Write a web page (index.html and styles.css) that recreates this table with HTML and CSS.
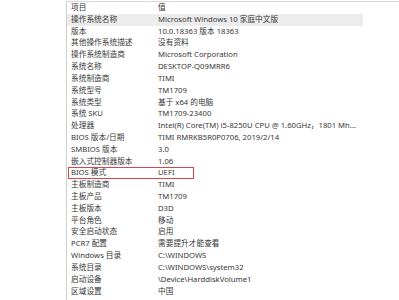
FILE: index.html
```html
<!DOCTYPE html>
<html lang="zh-CN">
<head>
<meta charset="utf-8">
<link rel="stylesheet" href="styles.css">
</head>
<body>
<div class="pane">
  <div class="list">
    <div class="row head"><span class="k">项目</span><span class="v">值</span></div>
    <div class="row sel"><span class="k">操作系统名称</span><span class="v">Microsoft Windows 10 家庭中文版</span></div>
    <div class="row"><span class="k">版本</span><span class="v">10.0.18363 版本 18363</span></div>
    <div class="row"><span class="k">其他操作系统描述</span><span class="v">没有资料</span></div>
    <div class="row"><span class="k">操作系统制造商</span><span class="v">Microsoft Corporation</span></div>
    <div class="row"><span class="k">系统名称</span><span class="v">DESKTOP-Q09MRR6</span></div>
    <div class="row"><span class="k">系统制造商</span><span class="v">TIMI</span></div>
    <div class="row"><span class="k">系统型号</span><span class="v">TM1709</span></div>
    <div class="row"><span class="k">系统类型</span><span class="v">基于 x64 的电脑</span></div>
    <div class="row"><span class="k">系统 SKU</span><span class="v">TM1709-23400</span></div>
    <div class="row"><span class="k">处理器</span><span class="v">Intel(R) Core(TM) i5-8250U CPU @ 1.60GHz，1801 Mh...</span></div>
    <div class="row"><span class="k">BIOS 版本/日期</span><span class="v">TIMI RMRKB5R0P0706, 2019/2/14</span></div>
    <div class="row"><span class="k">SMBIOS 版本</span><span class="v">3.0</span></div>
    <div class="row"><span class="k">嵌入式控制器版本</span><span class="v">1.06</span></div>
    <div class="row marked"><span class="k">BIOS 模式</span><span class="v">UEFI</span></div>
    <div class="row"><span class="k">主板制造商</span><span class="v">TIMI</span></div>
    <div class="row"><span class="k">主板产品</span><span class="v">TM1709</span></div>
    <div class="row"><span class="k">主板版本</span><span class="v">D3D</span></div>
    <div class="row"><span class="k">平台角色</span><span class="v">移动</span></div>
    <div class="row"><span class="k">安全启动状态</span><span class="v">启用</span></div>
    <div class="row"><span class="k">PCR7 配置</span><span class="v">需要提升才能查看</span></div>
    <div class="row"><span class="k">Windows 目录</span><span class="v">C:\WINDOWS</span></div>
    <div class="row"><span class="k">系统目录</span><span class="v">C:\WINDOWS\system32</span></div>
    <div class="row"><span class="k">启动设备</span><span class="v">\Device\HarddiskVolume1</span></div>
    <div class="row"><span class="k">区域设置</span><span class="v">中国</span></div>
  </div>
</div>
</body>
</html>
```
FILE: styles.css
```css
html, body {
  margin: 0;
  padding: 0;
  background: #ffffff;
  overflow: hidden;
}
body {
  width: 399px;
  height: 300px;
  font-family: "Noto Sans", "Noto Sans CJK SC", sans-serif;
  font-size: 7.7px;
  color: #383838;
}
.pane {
  margin-left: 66px;
  margin-top: 1px;
  border-left: 1px solid #cfcfcf;
  border-top: 1px solid #dadada;
  height: 298px;
}
.list {
  display: flex;
  flex-direction: column;
  width: 296px;
}
.row {
  position: relative;
  display: flex;
  align-items: center;
  height: 11.82px;
  line-height: 11.82px;
  white-space: nowrap;
}
.k {
  width: 87px;
  padding-left: 4px;
  flex: none;
}
.v {
  flex: none;
}
.sel {
  background: #ececec;
}
.marked::after {
  content: "";
  position: absolute;
  left: 1px;
  top: 0;
  width: 124px;
  height: 9.5px;
  border: 1.5px solid #d2494b;
}
```
